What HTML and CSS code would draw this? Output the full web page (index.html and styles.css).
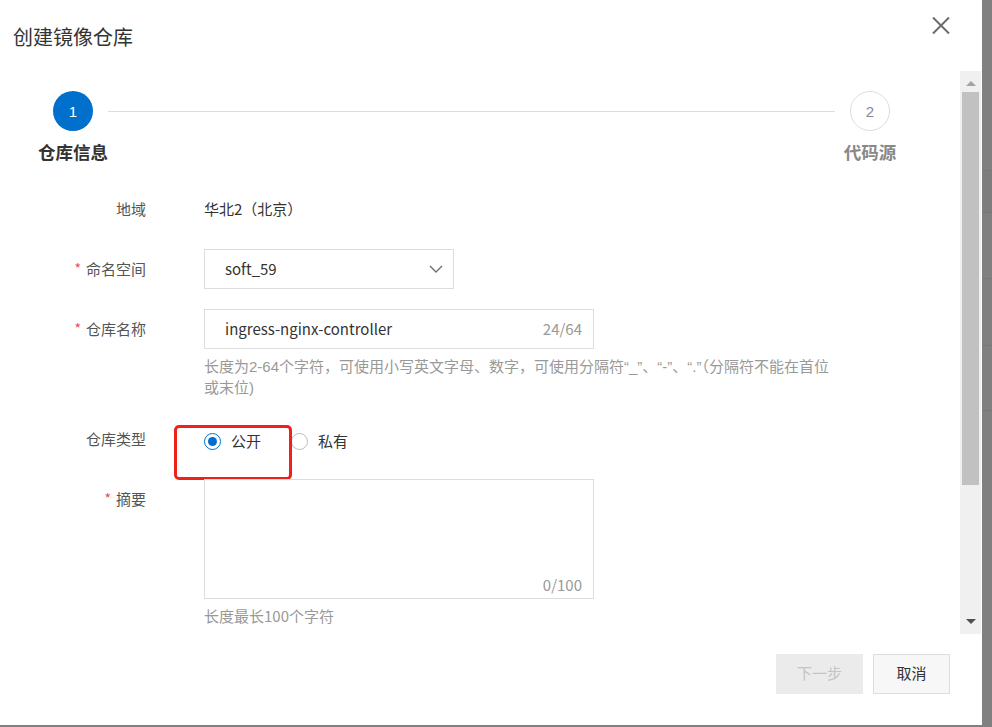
FILE: index.html
```html
<!DOCTYPE html>
<html lang="zh-CN">
<head>
<meta charset="utf-8">
<title>创建镜像仓库</title>
<link rel="stylesheet" href="styles.css">
</head>
<body>
<div class="modal">
  <div class="modal-header">
    <h1 class="title">创建镜像仓库</h1>
    <button class="close" type="button" aria-label="关闭">
      <svg width="18" height="17" viewBox="0 0 18 17"><path d="M1 0.5 L17 16.5 M17 0.5 L1 16.5" stroke="#6b6b6b" stroke-width="2" fill="none"/></svg>
    </button>
  </div>
  <div class="modal-body">
    <div class="content">
      <div class="steps">
        <div class="step step-active">
          <div class="step-circle">1</div>
          <div class="step-label">仓库信息</div>
        </div>
        <div class="step-line"></div>
        <div class="step step-todo">
          <div class="step-circle">2</div>
          <div class="step-label">代码源</div>
        </div>
      </div>
      <div class="form">
        <div class="form-row">
          <div class="form-label">地域</div>
          <div class="form-control"><div class="static-value">华北2（北京）</div></div>
        </div>
        <div class="form-row">
          <div class="form-label"><span class="req">*</span>命名空间</div>
          <div class="form-control">
            <div class="select"><span>soft_59</span>
              <svg width="14" height="8" viewBox="0 0 14 8"><path d="M1 1 L7 7 L13 1" stroke="#707070" stroke-width="1.4" fill="none"/></svg>
            </div>
          </div>
        </div>
        <div class="form-row">
          <div class="form-label"><span class="req">*</span>仓库名称</div>
          <div class="form-control">
            <div class="input"><span>ingress-nginx-controller</span><span class="counter">24/64</span></div>
            <div class="help help-gap help-latin">长度为2-64个字符，可使用小写英文字母、数字，可使用分隔符“_”、“-”、“.”（分隔符不能在首位或末位)</div>
          </div>
        </div>
        <div class="form-row">
          <div class="form-label">仓库类型</div>
          <div class="form-control">
            <div class="radio-group">
              <label class="radio"><span class="radio-dot checked"></span><span>公开</span></label>
              <label class="radio"><span class="radio-dot"></span><span>私有</span></label>
            </div>
            <div class="highlight"></div>
          </div>
        </div>
        <div class="form-row">
          <div class="form-label"><span class="req">*</span>摘要</div>
          <div class="form-control">
            <div class="textarea"><span class="counter">0/100</span></div>
            <div class="help help-small">长度最长100个字符</div>
          </div>
        </div>
      </div>
    </div>
    <div class="scrollbar">
      <div class="sb-up"></div>
      <div class="sb-thumb"></div>
      <div class="sb-space"></div>
      <div class="sb-down"></div>
    </div>
  </div>
  <div class="modal-footer">
    <button class="btn btn-disabled" type="button">下一步</button>
    <button class="btn btn-cancel" type="button">取消</button>
  </div>
</div>
</body>
</html>
```

FILE: styles.css
```css
* { box-sizing: border-box; }

body {
  margin: 0;
  width: 992px;
  height: 727px;
  overflow: hidden;
  font-family: "Noto Sans CJK SC", "Microsoft YaHei", sans-serif;
  background: linear-gradient(#808080 0 170px, #777 170px 171px, #7d7d7d 171px 212px, #777 212px 213px,
    #808080 213px 278px, #777 278px 279px, #808080 279px 345px, #777 345px 346px,
    #808080 346px 410px, #777 410px 411px, #808080 411px);
}

.modal {
  width: 982px;
  height: 725px;
  background: #fff;
  display: flex;
  flex-direction: column;
}

.modal-header {
  height: 71px;
  flex: none;
  display: flex;
  justify-content: space-between;
  align-items: flex-start;
  padding: 17px 32px 0 13px;
}

.title {
  margin: 6px 0 0;
  font-size: 20px;
  line-height: 28px;
  font-weight: normal;
  color: #333;
}

.close {
  width: 18px;
  height: 17px;
  padding: 0;
  border: 0;
  background: none;
  display: block;
}
.close svg { display: block; }

.modal-body {
  height: 563px;
  flex: none;
  display: flex;
}

.content {
  flex: 1;
  padding-top: 20px;
  overflow: hidden;
}

/* scrollbar */
.scrollbar {
  width: 21px;
  margin-right: 1px;
  background: #f0f0f0;
  display: flex;
  flex-direction: column;
  align-items: center;
}
.sb-up {
  width: 0;
  height: 0;
  margin-top: 10px;
  border-left: 5px solid transparent;
  border-right: 5px solid transparent;
  border-bottom: 5px solid #a3a3a3;
}
.sb-thumb {
  width: 17px;
  height: 393px;
  margin-top: 6px;
  background: #c1c1c1;
}
.sb-space { flex: 1; }
.sb-down {
  width: 0;
  height: 0;
  margin-bottom: 10px;
  border-left: 5px solid transparent;
  border-right: 5px solid transparent;
  border-top: 5px solid #505050;
}

/* steps */
.steps {
  display: flex;
  margin-left: 33px;
  width: 877px;
}
.step {
  width: 80px;
  flex: none;
  display: flex;
  flex-direction: column;
  align-items: center;
}
.step-line {
  flex: 1;
  height: 1px;
  background: #dcdcdc;
  margin: 20px -5px 0;
}
.step-circle {
  width: 40px;
  height: 40px;
  border-radius: 50%;
  display: flex;
  align-items: center;
  justify-content: center;
  font-size: 15px;
  font-family: "Liberation Sans", sans-serif;
}
.step-active .step-circle { background: #0070cc; color: #fff; }
.step-todo .step-circle { border: 1px solid #ddd; color: #7f8c99; }
.step-label {
  margin-top: 9px;
  font-size: 17.5px;
  line-height: 24px;
  font-weight: bold;
  color: #333;
  white-space: nowrap;
}
.step-todo .step-label { color: #888; }

/* form */
.form { margin-top: 25px; }
.form-row {
  display: flex;
  margin-bottom: 20px;
}
.form-label {
  width: 146px;
  flex: none;
  text-align: right;
  font-size: 15px;
  line-height: 39px;
  padding-bottom: 1px;
  color: #555;
}
.req {
  color: #e85050;
  font-size: 14px;
  margin-right: 5px;
  vertical-align: 1px;
}
.form-control {
  margin-left: 58px;
  position: relative;
}
.static-value {
  line-height: 40px;
  font-size: 15px;
  color: #333;
}
.select {
  width: 250px;
  height: 40px;
  border: 1px solid #ddd;
  display: flex;
  align-items: center;
  justify-content: space-between;
  padding: 0 10px 1px 20px;
  font-size: 15px;
  color: #333;
}
.select svg { display: block; margin-top: 1px; }
.input {
  width: 390px;
  height: 40px;
  border: 1px solid #ddd;
  display: flex;
  align-items: center;
  justify-content: space-between;
  padding: 0 11px 2px 20px;
  font-size: 15px;
  color: #333;
}
.counter { color: #999; font-size: 15px; }
.help {
  width: 640px;
  font-size: 15px;
  line-height: 21px;
  color: #999;
}
.help-latin {
  width: 632px;
  font-family: "Liberation Sans", "Noto Sans CJK SC", sans-serif;
}
.help-gap { margin-top: 7px; padding-bottom: 1px; }
.help-small { margin-top: 6px; }

.radio-group {
  height: 40px;
  padding-top: 4px;
  display: flex;
  align-items: center;
  font-size: 15px;
  color: #333;
}
.radio {
  display: flex;
  align-items: center;
  margin-right: 30px;
}
.radio span:last-child { margin-top: -2px; }
.radio-dot {
  width: 17px;
  height: 17px;
  border-radius: 50%;
  border: 1px solid #bbb;
  margin-right: 10px;
  display: flex;
  align-items: center;
  justify-content: center;
}
.radio-dot.checked { border-color: #0070cc; }
.radio-dot.checked::after {
  content: "";
  width: 9px;
  height: 9px;
  border-radius: 50%;
  background: #0070cc;
}

.highlight {
  position: absolute;
  left: -30px;
  top: 6px;
  width: 118px;
  height: 55px;
  border: 3px solid #f0201a;
  border-radius: 5px;
}

.textarea {
  width: 390px;
  height: 120px;
  border: 1px solid #ddd;
  display: flex;
  align-items: flex-end;
  justify-content: flex-end;
  padding: 0 11px 3px;
  line-height: 21px;
}

/* footer */
.modal-footer {
  flex: 1;
  display: flex;
  justify-content: flex-end;
  align-items: flex-start;
  gap: 10px;
  padding: 20px 32px 0;
}
.btn {
  height: 40px;
  font-size: 15px;
  font-family: inherit;
  border: 1px solid #ddd;
  padding: 0 0 3px;
}
.btn-disabled {
  width: 87px;
  background: #ebebeb;
  border-color: #ebebeb;
  color: #c4c4c4;
}
.btn-cancel {
  width: 77px;
  background: #f7f7f7;
  color: #333;
}
```
